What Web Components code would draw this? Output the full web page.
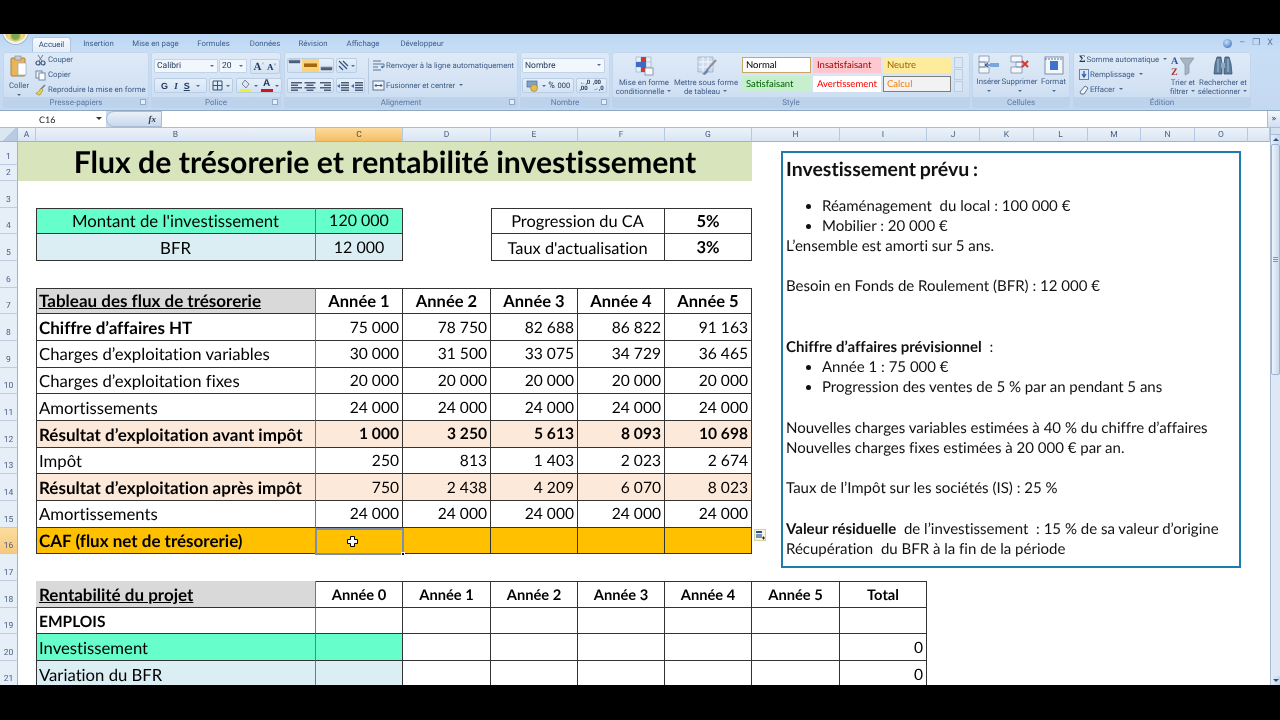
<!DOCTYPE html>
<html lang="fr">
<head>
<meta charset="utf-8">
<title>Flux de trésorerie</title>
<style>
  html, body { margin: 0; background: #000; }
  body { width: 1280px; height: 720px; overflow: hidden; font-family: "Lato", "Liberation Sans", sans-serif; }
</style>
</head>
<body>
<xl-app>
  <xl-ribbon></xl-ribbon>
  <xl-formula-bar cell="C16"></xl-formula-bar>
  <xl-sheet>
    <xl-textbox></xl-textbox>
  </xl-sheet>
</xl-app>

<script>
const UI_FONT = `"Roboto", "Liberation Sans", sans-serif`;
const SHEET_FONT = `"Lato", "Liberation Sans", sans-serif`;

class XlApp extends HTMLElement {
    constructor() {
        super();
        this.attachShadow({ mode: "open" });
        this.shadowRoot.innerHTML = `
            <style>
                :host { display: block; width: 1280px; height: 720px; padding: 34px 0 35px; box-sizing: border-box; background: #000; text-rendering: geometricPrecision; }
                .frame { display: flex; flex-direction: column; height: 651px; overflow: hidden; background: #fff; filter: blur(0.3px); }
            </style>
            <div class="frame"><slot></slot></div>
        `;
    }
}

// Groupe du ruban : contenu + libellé en bas
class XlGroup extends HTMLElement {
    constructor() {
        super();
        this.attachShadow({ mode: "open" });
    }
    connectedCallback() {
        const launcher = this.hasAttribute("launcher") ? `<span class="launch"></span>` : "";
        this.shadowRoot.innerHTML = `
            <style>
                :host { display: flex; flex-direction: column; flex: none; height: 56px; box-sizing: border-box; border-radius: 3px;
                        background: linear-gradient(#dfeaf7, #d3e2f4 60%, #c9dbf0); box-shadow: inset 0 0 0 1px #c2d6ec; }
                .body { height: 45px; display: flex; }
                .label { position: relative; height: 11px; text-align: center; font: 8px/11.5px ${UI_FONT}; color: #5a7ba3;
                         background: #bdd3ec; border-radius: 0 0 3px 3px; }
                .launch { position: absolute; right: 3px; top: 2px; width: 6px; height: 6px; border: 1px solid #8ea9c9; box-sizing: border-box; background: #e6eef8; }
            </style>
            <div class="body"><slot></slot></div>
            <div class="label">${this.getAttribute("label")}${launcher}</div>
        `;
        this.style.width = this.getAttribute("w") + "px";
        this.style.marginLeft = (this.getAttribute("gap") || 2) + "px";
    }
}

class XlRibbon extends HTMLElement {
    constructor() {
        super();
        this.attachShadow({ mode: "open" });
    }
    connectedCallback() {
        const tabs = [["Accueil", 39], ["Insertion", 55], ["Mise en page", 59], ["Formules", 57], ["Données", 46], ["Révision", 50], ["Affichage", 50], ["Développeur", 68]];
        this.shadowRoot.innerHTML = `
            <style>
                :host { display: block; height: 77px; flex: none; font-family: ${UI_FONT}; color: #3e5c86; font-size: 7.8px;
                        background: linear-gradient(#bcd7f3, #c8def5 25%, #c4d9f1); border-bottom: 1px solid #8fa8c4; box-sizing: border-box; position: relative; }
                .orb { position: absolute; left: 3px; top: -15px; width: 25px; height: 25px; border-radius: 50%; box-sizing: border-box; border: 2px solid #f0f3f6;
                       background: radial-gradient(circle at 50% 70%, #7ea64a 0 18%, #ecdc8a 34%, #dcc56a 55%, #b8aa7c 85%); box-shadow: 0 0 0 1px #a4b5c7; }
                .tabs { display: flex; height: 17px; padding-left: 32px; }
                .tab { flex: none; text-align: center; line-height: 19px; height: 17px; box-sizing: border-box; color: #3d5f8d; white-space: nowrap; }
                .tab.on { background: linear-gradient(#f6faff, #e2edf9); border: 1px solid #aec4de; border-bottom: 0; border-radius: 3px 3px 0 0; margin-top: 3px; height: 15px; line-height: 13px; color: #2e4a70; }
                .win { position: absolute; right: 7px; top: 3px; display: flex; align-items: center; gap: 7px; color: #5a7ba3; font-size: 9px; line-height: 12px; }
                .help { width: 9px; height: 9px; border-radius: 50%; background: radial-gradient(circle at 40% 35%, #c8e0fa, #2a63b5); margin-right: 0; }
                .groups { display: flex; padding-left: 1px; height: 56px; margin-top: 1px; }

                .mini { display: flex; align-items: center; gap: 2px; height: 15px; white-space: nowrap; color: #3e5c86; }
                .mini svg { flex: none; }
                .col { display: flex; flex-direction: column; }
                .big { display: flex; flex-direction: column; align-items: center; flex: none; text-align: center; line-height: 8.5px; white-space: nowrap; padding-top: 3px; }
                .big .txt { margin-top: 3px; }
                .arrow { display: inline-block; width: 0; height: 0; border: 2px solid transparent; border-top: 2.5px solid #4f6b90; border-bottom: 0; margin: 0 1px 1px 3px; vertical-align: middle; }

                .stack { display: flex; flex-direction: column; gap: 5px; padding: 7px 0 0 3px; }
                .row { display: flex; gap: 2px; height: 14px; }
                .box { display: flex; align-items: center; height: 14px; box-sizing: border-box; background: #f2f7fd; border: 1px solid #c0d3e9; padding: 0 2px; color: #223a5c; font-size: 8.5px; border-radius: 1px; }
                .box .arrow { margin-left: auto; }
                .tool { display: flex; align-items: center; justify-content: space-evenly; height: 15px; box-sizing: border-box; background: linear-gradient(#e6f0fb, #d3e2f4); border: 1px solid #b9cde4; border-radius: 2px; font-size: 9px; color: #223a5c; }

                .sep { width: 1px; margin: 6px 3px 3px; background: #b6cbe3; }
                .wrap { display: flex; flex-direction: column; padding-top: 6px; gap: 5px; }
                .wrap .mini { gap: 1px; color: #3e5c86; }

                .gallery { display: grid; grid-template-columns: 69px 68px 68px; grid-template-rows: 16px 16px; column-gap: 2px; row-gap: 3px; margin: 5px 0 0 3px; font: 9.5px/16px ${SHEET_FONT}; }
                .gallery span { padding: 1px 0 0 4px; box-sizing: border-box; }
                .g-normal { background: #fff; color: #000; box-shadow: inset 0 0 0 1px #caa760; }
                .g-bad { background: #ffc7ce; color: #9c0006; }
                .g-neutral { background: #ffeb9c; color: #9c6500; }
                .g-good { background: #c6efce; color: #006100; }
                .g-warn { background: #fff; color: #f00; }
                .g-calc { background: #f2f2f2; color: #fa7d00; box-shadow: inset 0 0 0 1px #7f7f7f; }
                .spin { width: 9px; margin: 5px 0 0 3px; display: flex; flex-direction: column; gap: 1px; }
                .spin i { display: block; height: 11px; background: #dbe7f5; border: 1px solid #b9cde4; box-sizing: border-box; }
            </style>
            <div class="orb"></div>
            <div class="tabs">
                ${tabs.map(([t, w], i) => `<div class="tab${i ? "" : " on"}" style="width:${w}px">${t}</div>`).join("")}
            </div>
            <div class="win"><span class="help"></span><span>–</span><span>&#10064;</span><span>X</span></div>
            <div class="groups">
                <xl-group label="Presse-papiers" w="146" launcher>
                    <div class="big" style="width:32px">
                        <svg width="18" height="22" viewBox="0 0 18 22"><rect x="1" y="3" width="14" height="18" rx="1" fill="#e8b55a" stroke="#a9823f"/><rect x="5" y="1" width="6" height="4" fill="#c9cdd3" stroke="#80848a" stroke-width=".6"/><path d="M8 8h8v12H8z" fill="#fff" stroke="#9aa7b6" stroke-width=".7"/></svg>
                        <span class="txt" style="margin-top:5px">Coller</span>
                        <span class="arrow" style="margin:3px 0 0"></span>
                    </div>
                    <div class="col">
                        <div class="mini"><svg width="11" height="12" viewBox="0 0 11 12"><path d="M3 1l4 6M8 1L4 7" stroke="#6f7d8d" fill="none"/><circle cx="3" cy="9" r="2" fill="none" stroke="#3b587c" stroke-width="1.2"/><circle cx="8" cy="9" r="2" fill="none" stroke="#3b587c" stroke-width="1.2"/></svg>Couper</div>
                        <div class="mini"><svg width="11" height="12" viewBox="0 0 11 12"><rect x="1" y="2" width="6" height="7" fill="#eef3f9" stroke="#6f87a5"/><rect x="4" y="4" width="6" height="7" fill="#fff" stroke="#6f87a5"/></svg>Copier</div>
                        <div class="mini"><svg width="11" height="12" viewBox="0 0 11 12"><path d="M10 1L6 5" stroke="#6f7d8d" stroke-width="1.6"/><path d="M6 4l2 2-3 5c-2 0-4-1-4-2 2 0 3-2 5-5z" fill="#e8d055" stroke="#8f7d2a" stroke-width=".6"/></svg>Reproduire la mise en forme</div>
                    </div>
                </xl-group>

                <xl-group label="Police" w="130" launcher>
                    <div class="stack">
                        <div class="row">
                            <div class="box" style="width:64px;font-family:${SHEET_FONT}">Calibri<span class="arrow"></span></div>
                            <div class="box" style="width:28px;margin-left:-1px;font-family:${SHEET_FONT}">20<span class="arrow"></span></div>
                            <div class="tool" style="width:30px;margin-left:1px;font:bold 11px 'Liberation Serif',serif;color:#1f3656"><span>A<sup style="font-size:5px;color:#c58a1e">˄</sup></span><span style="font-size:9px">A<sup style="font-size:5px;color:#3f6db0">˅</sup></span></div>
                        </div>
                        <div class="row">
                            <div class="tool" style="width:53px;font-family:'Liberation Sans',sans-serif">
                                <b>G</b><i style="font-family:'Liberation Serif',serif;font-weight:bold">I</i><b style="text-decoration:underline">S</b><span class="arrow" style="margin:0"></span>
                            </div>
                            <div class="tool" style="width:24px"><svg width="11" height="11" viewBox="0 0 11 11"><path d="M1 1h9v9H1zM5.500 1v9M1 5.500h9" fill="none" stroke="#33527a"/></svg><span class="arrow" style="margin:0"></span></div>
                            <div class="tool" style="width:46px;margin-left:1px">
                                <svg width="13" height="13" viewBox="0 0 13 13"><path d="M6 1l4 4-3 4-4-4z" fill="#dfe6ee" stroke="#5a6f88" stroke-width=".8"/><rect x="1" y="10" width="11" height="3" fill="#f2ee3a"/></svg><span class="arrow" style="margin:0"></span>
                                <span style="display:flex;flex-direction:column;align-items:center;font:bold 10px/10px 'Liberation Sans',sans-serif;color:#1f3656;border-bottom:3px solid #d7121c;width:12px;height:13px;box-sizing:border-box">A</span><span class="arrow" style="margin:0"></span>
                            </div>
                        </div>
                    </div>
                </xl-group>

                <xl-group label="Alignement" w="234" launcher gap="3">
                    <div class="stack" style="padding-left:3px;padding-top:6px;gap:5px">
                        <div class="row" style="height:15px">
                            <div class="tool" style="width:47px;justify-content:flex-start;overflow:hidden">
                                ${this.alignIcon(2)}<span style="background:#f9d27a;height:13px;display:flex;align-items:center;padding:0 1px;margin:0 1px">${this.alignIcon(6, "#a4660e")}</span>${this.alignIcon(10)}
                            </div>
                            <div class="tool" style="width:21px"><svg width="11" height="11" viewBox="0 0 11 11"><path d="M1 1l8 8M1 6l4 4M5 1l5 5" stroke="#33527a" fill="none" stroke-width="1.2"/></svg><span class="arrow" style="margin:0"></span></div>
                        </div>
                        <div class="row" style="height:15px">
                            <div class="tool" style="width:47px">${this.linesIcon("l")}${this.linesIcon("c")}${this.linesIcon("r")}</div>
                            <div class="tool" style="width:29px">${this.linesIcon("i")}${this.linesIcon("o")}</div>
                        </div>
                    </div>
                    <div class="sep"></div>
                    <div class="wrap">
                        <div class="mini"><svg width="13" height="13" viewBox="0 0 13 13"><path d="M1 2h8M1 5h11v3H9M1 8h5M1 11h8" stroke="#5d7593" fill="none"/><path d="M9 8l2-1.500v3z" fill="#3f6db0"/></svg>Renvoyer à la ligne automatiquement</div>
                        <div class="mini"><svg width="13" height="13" viewBox="0 0 13 13"><rect x="1" y="2" width="11" height="9" fill="#f1f5fa" stroke="#5d7593"/><path d="M3 6.500h7M3 6.500l1.500-1.500M3 6.500l1.500 1.500M10 6.500L8.500 5M10 6.500L8.500 8" stroke="#2f5fa3" fill="none"/></svg>Fusionner et centrer<span class="arrow"></span></div>
                    </div>
                </xl-group>

                <xl-group label="Nombre" w="90" launcher>
                    <div class="stack" style="padding:6px 0 0 2px;gap:5px">
                        <div class="box" style="width:83px;height:15px;font-family:${SHEET_FONT}">Nombre<span class="arrow"></span></div>
                        <div class="row" style="height:15px">
                            <div class="tool" style="width:52px"><svg width="13" height="12" viewBox="0 0 13 12"><rect x="1" y="1" width="10" height="6" fill="#7fa3c9" stroke="#4b6b91" stroke-width=".7"/><circle cx="8" cy="8" r="3.500" fill="#e4bd4f" stroke="#9b7b24" stroke-width=".6"/></svg><span class="arrow" style="margin:0"></span><span>%</span><span style="font-size:7.500px">000</span></div>
                            <div class="tool" style="width:31px;font-size:6px;line-height:6px;font-weight:bold"><span>←,0<br>,00</span><span>,00<br>→,0</span></div>
                        </div>
                    </div>
                </xl-group>

                <xl-group label="Style" w="358">
                    <div class="big" style="width:58px;margin-left:3px">
                        <svg width="21" height="21" viewBox="0 0 21 21"><path d="M2 2h15v15H2z" fill="#e9eff7" stroke="#9cb1cb" stroke-width=".7"/><path d="M2 7h15M2 12h15M7 2v15M12 2v15" stroke="#9cb1cb" stroke-width=".6"/><rect x="7" y="2" width="5" height="5" fill="#d7342a"/><rect x="2" y="7" width="10" height="5" fill="#3d6bc4"/><rect x="7" y="12" width="5" height="5" fill="#d7342a"/><rect x="11" y="13" width="8" height="7" fill="#f5f7fa" stroke="#667a94" stroke-width=".7"/></svg>
                        <span class="txt">Mise en forme<br>conditionnelle<span class="arrow"></span></span>
                    </div>
                    <div class="big" style="width:66px">
                        <svg width="21" height="21" viewBox="0 0 21 21"><path d="M2 2h15v15H2z" fill="#cfdcef" stroke="#8ea6c6" stroke-width=".7"/><path d="M2 7h15M2 12h15M7 2v15M12 2v15" stroke="#fff" stroke-width=".8"/><path d="M20 5L11 15" stroke="#8b9098" stroke-width="2"/><path d="M11 14l2 2-4 4-3-1c2-1 3-3 5-5z" fill="#6e87a8"/></svg>
                        <span class="txt">Mettre sous forme<br>de tableau<span class="arrow"></span></span>
                    </div>
                    <div class="gallery">
                        <span class="g-normal">Normal</span><span class="g-bad">Insatisfaisant</span><span class="g-neutral">Neutre</span>
                        <span class="g-good">Satisfaisant</span><span class="g-warn">Avertissement</span><span class="g-calc">Calcul</span>
                    </div>
                    <div class="spin"><i></i><i></i><i></i></div>
                </xl-group>

                <xl-group label="Cellules" w="98">
                    <div class="big" style="width:27px;margin-left:3px">
                        <svg width="22" height="20" viewBox="0 0 22 20"><path d="M1 1h10v6H1zM1 7h6v5H1zM1 12h10v6H1z" fill="#f3f6fa" stroke="#7b90a9" stroke-width=".8"/><rect x="12" y="8" width="9" height="4" fill="#7aa6de"/><path d="M12 10H7m0 0l3-2m-3 2l3 2" stroke="#27508f" fill="none"/></svg>
                        <span class="txt">Insérer</span><span class="arrow" style="margin:3px 0 0"></span>
                    </div>
                    <div class="big" style="width:35px">
                        <svg width="22" height="20" viewBox="0 0 22 20"><path d="M2 1h11v6H2zM7 7h6v5H7zM2 12h11v6H2z" fill="#f3f6fa" stroke="#7b90a9" stroke-width=".8"/><path d="M13 6l6 6m0-6l-6 6" stroke="#d8382d" stroke-width="2"/></svg>
                        <span class="txt">Supprimer</span><span class="arrow" style="margin:3px 0 0"></span>
                    </div>
                    <div class="big" style="width:33px">
                        <svg width="22" height="20" viewBox="0 0 22 20"><rect x="2" y="2" width="18" height="17" fill="#f3f6fa" stroke="#7b90a9"/><path d="M2 4h18" stroke="#5d7593" stroke-dasharray="2 1"/><rect x="7" y="6" width="8" height="9" fill="#3f73c9"/></svg>
                        <span class="txt">Format</span><span class="arrow" style="margin:3px 0 0"></span>
                    </div>
                </xl-group>

                <xl-group label="Édition" w="178" gap="3">
                    <div class="col" style="width:92px;padding-left:6px;box-sizing:border-box">
                        <div class="mini" style="height:15px;gap:1px"><span style="font:bold 10px 'Liberation Serif',serif;color:#1f3656;width:10px">Σ</span>Somme automatique<span class="arrow"></span></div>
                        <div class="mini" style="height:15px;gap:1px"><svg width="10" height="11" viewBox="0 0 10 11"><rect x=".5" y=".5" width="9" height="10" fill="#dce8f6" stroke="#5f86b7"/><path d="M5 2v5M3 5l2 3 2-3" stroke="#2a5fb0" fill="none" stroke-width="1.300"/></svg>Remplissage<span class="arrow"></span></div>
                        <div class="mini" style="height:15px;gap:1px"><svg width="10" height="11" viewBox="0 0 10 11"><path d="M1 8l5-6 3 2-4 6H2z" fill="#f4f5f7" stroke="#5d6f88"/></svg>Effacer<span class="arrow"></span></div>
                    </div>
                    <div class="big" style="width:36px">
                        <svg width="24" height="24" viewBox="0 0 24 24" style="margin-bottom:-3px"><text x="0" y="9" font-size="10" font-weight="bold" font-family="Liberation Serif" fill="#2a55a0">A</text><text x="0" y="20" font-size="10" font-weight="bold" font-family="Liberation Serif" fill="#a5322a">Z</text><path d="M9 3h14l-5 7v8l-4 2V10z" fill="#a7b4c4" stroke="#7b8897" stroke-width=".6"/></svg>
                        <span class="txt">Trier et<br>filtrer<span class="arrow"></span></span>
                    </div>
                    <div class="big" style="width:44px">
                        <svg width="22" height="21" viewBox="0 0 22 21"><path d="M3 9l2-7h4l1 7v10H2zM19 9l-2-7h-4l-1 7v10h8z" fill="#5f7f9f" stroke="#2f4760" stroke-width=".7"/><rect x="9" y="8" width="4" height="5" fill="#8da8c3"/><path d="M6 4v13M16 4v13" stroke="#a9c3da"/></svg>
                        <span class="txt">Rechercher et<br>sélectionner<span class="arrow"></span></span>
                    </div>
                </xl-group>
            </div>
        `;
    }

    alignIcon(y, color = "#4d5f78") {
        return `<svg width="15" height="13" viewBox="0 0 15 13"><rect x="1" y="${y - 2}" width="13" height="4" fill="${color}" rx=".5"/><rect x="1" y="${y - 2}" width="13" height="1" fill="#fff" opacity=".3"/></svg>`;
    }

    linesIcon(kind) {
        const w = { l: [11, 7, 11, 7], c: [11, 7, 11, 7], r: [11, 7, 11, 7], i: [8, 8, 8, 8], o: [8, 8, 8, 8] }[kind];
        const x = (len) => (kind === "r" ? 12 - len : kind === "c" ? (12 - len) / 2 : kind === "i" || kind === "o" ? 4 : 1);
        const lines = w.map((len, n) => `<rect x="${x(len)}" y="${2 + n * 2.500}" width="${len}" height="1.500" fill="#4d5f78"/>`).join("");
        return `<svg width="13" height="12" viewBox="0 0 13 12">${lines}${kind === "i" || kind === "o" ? `<path d="M0 6l3-2v4z" fill="#3f6db0"/>` : ""}</svg>`;
    }
}

class XlFormulaBar extends HTMLElement {
    constructor() {
        super();
        this.attachShadow({ mode: "open" });
    }
    connectedCallback() {
        this.shadowRoot.innerHTML = `
            <style>
                :host { display: flex; flex: none; height: 17px; box-sizing: border-box; background: #c5d8ee; border-bottom: 1px solid #a7bdd8; font-family: ${SHEET_FONT}; }
                .name { width: 106px; flex: none; background: #fff; display: flex; align-items: center; padding-left: 39px; box-sizing: border-box; font-size: 9px; color: #222; position: relative; }
                .name::after { content: ""; position: absolute; right: 4px; top: 6px; border: 3px solid transparent; border-top: 3px solid #333; border-bottom: 0; }
                .pill { width: 56px; flex: none; display: flex; align-items: center; justify-content: flex-end; padding-right: 5px; box-sizing: border-box; border-radius: 8px 0 0 8px; background: linear-gradient(#e9f0f9, #c9d9ec); border: 1px solid #a9bdd6; font: italic bold 9px "Liberation Serif", serif; color: #334; }
                .input { flex: 1; background: #fff; }
                .more { width: 12px; flex: none; background: linear-gradient(#f1f6fc, #cfdeef); border-left: 1px solid #a7bdd8; font: 8px/15px "DejaVu Sans", sans-serif; text-align: center; color: #223; }
            </style>
            <div class="name">${this.getAttribute("cell")}</div>
            <div class="pill">fx</div>
            <div class="input"></div>
            <div class="more">»</div>
        `;
    }
}

class XlSheet extends HTMLElement {
    constructor() {
        super();
        this.attachShadow({ mode: "open" });
    }
    connectedCallback() {
        const cols = ["A", "B", "C", "D", "E", "F", "G", "H", "I", "J", "K", "L", "M", "N", "O"];
        const widths = [18, 280, 87, 88, 87, 87, 87, 88, 87, 53, 54, 54, 53, 54, 53, 22];
        const cells = [];
        const put = (row, col, text, cls = "", span = 1, rowSpan = 1) =>
            cells.push(`<div class="c ${cls}" style="grid-row:${row + 1}/span ${rowSpan};grid-column:${col}/span ${span}">${text}</div>`);

        const head = cols.map((c, i) => `<div class="ch${c === "C" ? " sel" : ""}" style="grid-row:1;grid-column:${i + 2}">${c}</div>`).join("")
            + `<div class="ch" style="grid-row:1;grid-column:17"></div>`;
        const rowsHead = Array.from({ length: 21 }, (_, i) => `<div class="rh${i === 15 ? " sel" : ""}" style="grid-row:${i + 2};grid-column:1">${i + 1}</div>`).join("");

        // Titre
        put(1, 2, "Flux de trésorerie et rentabilité investissement", "title", 7, 2);

        // Paramètres
        put(4, 3, "Montant de l'investissement", "mid top left b green");
        put(4, 4, "120 000", "mid top green");
        put(5, 3, "BFR", "mid left b blue");
        put(5, 4, "12 000", "mid blue");
        put(4, 6, "Progression du CA", "mid top left lift", 2);
        put(4, 8, "5%", "mid top bold");
        put(5, 6, "Taux d'actualisation", "mid left lift", 2);
        put(5, 8, "3%", "mid bold");

        // Tableau des flux
        put(7, 3, "Tableau des flux de trésorerie", "top left b grey bold ul");
        for (let i = 1; i <= 5; i++) put(7, 3 + i, "Année " + i, "top mid bold");
        const flux = [
            [8, "Chiffre d’affaires HT", ["75 000", "78 750", "82 688", "86 822", "91 163"], "labelbold"],
            [9, "Charges d’exploitation variables", ["30 000", "31 500", "33 075", "34 729", "36 465"], ""],
            [10, "Charges d’exploitation fixes", ["20 000", "20 000", "20 000", "20 000", "20 000"], ""],
            [11, "Amortissements", ["24 000", "24 000", "24 000", "24 000", "24 000"], ""],
            [12, "Résultat d’exploitation avant impôt", ["1 000", "3 250", "5 613", "8 093", "10 698"], "peach allbold"],
            [13, "Impôt", ["250", "813", "1 403", "2 023", "2 674"], ""],
            [14, "Résultat d’exploitation après impôt", ["750", "2 438", "4 209", "6 070", "8 023"], "peach labelbold"],
            [15, "Amortissements", ["24 000", "24 000", "24 000", "24 000", "24 000"], ""],
            [16, "CAF (flux net de trésorerie)", ["", "", "", "", ""], "orange labelbold"],
        ];
        for (const [r, label, vals, kind] of flux) {
            const fill = kind.includes("peach") ? "peach" : kind.includes("orange") ? "orange" : "";
            const labelBold = kind.includes("bold") ? "bold" : "";
            put(r, 3, label, `left b ${fill} ${labelBold}`);
            vals.forEach((v, i) => put(r, 4 + i, v, `num ${fill} ${kind.includes("allbold") ? "bold" : ""}`));
        }

        // Rentabilité
        put(18, 3, "Rentabilité du projet", "grey bold ul noborder b");
        for (let i = 0; i <= 5; i++) put(18, 4 + i, "Année " + i, "top mid bold small lift");
        put(18, 10, "Total", "top mid bold small lift");
        put(19, 3, "EMPLOIS", "left b bold caps low");
        put(20, 3, "Investissement", "left b green low");
        put(21, 3, "Variation du BFR", "left b blue low");
        for (let r = 19; r <= 21; r++) {
            for (let c = 4; c <= 10; c++) {
                const fill = c === 4 ? (r === 20 ? "green" : r === 21 ? "blue" : "") : "";
                put(r, c, c === 10 && r > 19 ? "0" : "", `num low ${fill}`);
            }
        }

        this.shadowRoot.innerHTML = `
            <style>
                :host { display: flex; flex: 1; min-height: 0; position: relative; background: #fff; overflow: hidden; font-family: ${SHEET_FONT}; color: #000; font-variant-ligatures: none; }
                .grid { flex: none; width: 1270px; display: grid; grid-template-columns: 18px ${widths.map((w) => w + "px").join(" ")};
                        grid-template-rows: 14px 23px 16px repeat(19, 26.67px); background: #fff; }
                .corner { grid-row: 1; grid-column: 1; background: linear-gradient(135deg, #dbe6f3 50%, #b8cbe2 50%); border-right: 1px solid #a9bdd6; border-bottom: 1px solid #9db3cf; box-sizing: border-box; }
                .ch { background: linear-gradient(#edf2f9, #d9e5f3); border-right: 1px solid #b6c9e0; border-bottom: 1px solid #9db3cf; box-sizing: border-box; font: 8.5px/14px ${UI_FONT}; text-align: center; color: #4a6183; }
                .ch.sel { background: linear-gradient(#fbdc9d, #f6bd63); color: #5a4a2a; }
                .rh { background: #e6eef8; border-right: 1px solid #9db3cf; border-bottom: 1px solid #bccde1; box-sizing: border-box; font: 8.5px/10px ${UI_FONT}; text-align: center; color: #4a6183; display: flex; align-items: flex-end; justify-content: center; padding-bottom: 2px; }
                .rh.sel { background: linear-gradient(#fbdc9d, #f6c97e); }

                .c { box-sizing: border-box; display: flex; align-items: center; font-size: 16.7px; padding: 0 3px; white-space: nowrap; border-right: 1px solid #333; border-bottom: 1px solid #333; min-width: 0; }
                .title { font-size: 30.2px; font-weight: 700; justify-content: center; background: #d8e4bc; border: 0; padding-top: 1px; }
                .left { border-left: 1px solid #333; padding-left: 2px; padding-top: 1px; }
                .num { padding-top: 1px; }
                .top { border-top: 1px solid #333; padding-top: 0; }
                .b { border-right-color: #777; }
                .mid { justify-content: center; font-size: 16px; padding-top: 0; }
                .mid.left { font-size: 16.4px; }
                .mid.left.b { font-size: 16.8px; }
                .mid.bold { font-size: 16.5px; }
                .num { justify-content: flex-end; font-size: 15.6px; }
                .bold { font-weight: 700; }
                .left.bold { font-size: 17px; }
                .ul { text-decoration: underline; }
                .mid.small { font-size: 14.7px; }
                .caps.caps { font-size: 15.500px; }
                .c.lift { padding-top: 2px; }
                .c.low { padding-top: 3px; }
                .green { background: #66ffcc; }
                .blue { background: #daeef3; }
                .grey { background: #d9d9d9; }
                .peach { background: #fde9d9; }
                .orange { background: #ffc000; }
                .noborder { font-size: 17px; border-bottom: 1px solid #333; padding-left: 3px; padding-top: 1px; }

                .selection { position: absolute; left: 315px; top: 399.500px; width: 89px; height: 27.500px; box-sizing: border-box; border: 2px solid #7f8fa9; }
                .selection::after { content: ""; position: absolute; right: -3px; bottom: -3px; width: 4px; height: 4px; background: #000; border: 1px solid #fff; box-sizing: border-box; }
                .cursor { position: absolute; left: 347px; top: 408px; }
                .autofill { position: absolute; left: 754px; top: 401px; width: 12px; height: 12px; }
                .scroll { flex: none; width: 10px; background: #dfe9f5; border-left: 1px solid #a9bdd6; box-sizing: border-box; display: flex; flex-direction: column; }
                .scroll .split { height: 6px; background: #d3e1f1; border-bottom: 1px solid #a9bdd6; }
                .scroll .up, .scroll .down { height: 9px; background: linear-gradient(90deg, #e6eef8, #c6d7ea); position: relative; }
                .scroll .up::after, .scroll .down::after { content: ""; position: absolute; left: 2px; top: 3px; border: 3px solid transparent; }
                .scroll .up::after { border-bottom: 3px solid #33527a; border-top: 0; }
                .scroll .down::after { border-top: 3px solid #33527a; border-bottom: 0; }
                .scroll .thumb { height: 231px; background: linear-gradient(90deg, #eff4fb, #c9d9ed); border: 1px solid #9db3cf; box-sizing: border-box; border-radius: 2px; position: relative; }
                .scroll .thumb::after { content: ""; position: absolute; left: 1px; right: 1px; top: 112px; height: 6px; background: repeating-linear-gradient(#7f97b5 0 1px, transparent 1px 2px); }
                .scroll .fill { flex: 1; }
            </style>
            <div class="grid">
                <div class="corner"></div>
                ${head}${rowsHead}${cells.join("")}
            </div>
            <div class="scroll"><div class="split"></div><div class="up"></div><div class="thumb"></div><div class="fill"></div><div class="down"></div></div>
            <div class="selection"></div>
            <svg class="cursor" width="11" height="11" viewBox="0 0 11 11"><path d="M3.500 .5h4v3h3v4h-3v3h-4v-3h-3v-4h3z" fill="#fff" stroke="#000"/></svg>
            <svg class="autofill" viewBox="0 0 12 12"><rect x=".5" y=".5" width="11" height="11" fill="#f7f3dd" stroke="#d8d2a8"/><rect x="2" y="2" width="6" height="2" fill="#27508f"/><rect x="2" y="5" width="6" height="4" fill="#7a93b8"/><path d="M8 9h3M9.500 7.500v3" stroke="#222"/></svg>
            <slot></slot>
        `;
    }
}

class XlTextbox extends HTMLElement {
    constructor() {
        super();
        this.attachShadow({ mode: "open" });
        this.shadowRoot.innerHTML = `
            <style>
                :host { display: block; position: absolute; left: 781px; top: 23px; width: 460px; height: 417px; box-sizing: border-box; border: 2px solid #1f7ab0; background: #fff; padding: 6px 3px; font: 15px/20.2px ${SHEET_FONT}; color: #111; white-space: nowrap; font-variant-ligatures: none; }
                h2 { font-size: 19.5px; line-height: 22px; margin: 0 0 14.5px; font-weight: 700; word-spacing: -1px; }
                ul { margin: 0; padding: 0 0 0 36px; }
                p { margin: 0; min-height: 20.2px; }
                b { font-weight: 700; }
            </style>
            <h2>Investissement prévu :</h2>
            <ul>
                <li>Réaménagement&nbsp; du local : 100 000 €</li>
                <li>Mobilier : 20 000 €</li>
            </ul>
            <p>L’ensemble est amorti sur 5 ans.</p>
            <p></p>
            <p>Besoin en Fonds de Roulement (BFR) : 12 000 €</p>
            <p></p>
            <p></p>
            <p><b>Chiffre d’affaires prévisionnel</b>&nbsp; :</p>
            <ul>
                <li>Année 1 : 75 000 €</li>
                <li>Progression des ventes de 5 % par an pendant 5 ans</li>
            </ul>
            <p></p>
            <p>Nouvelles charges variables estimées à 40 % du chiffre d’affaires</p>
            <p>Nouvelles charges fixes estimées à 20 000 € par an.</p>
            <p></p>
            <p>Taux de l’Impôt sur les sociétés (IS) : 25 %</p>
            <p></p>
            <p><b>Valeur résiduelle</b>&nbsp; de l’investissement&nbsp; : 15 % de sa valeur d’origine</p>
            <p>Récupération&nbsp; du BFR à la fin de la période</p>
        `;
    }
}

customElements.define("xl-app", XlApp);
customElements.define("xl-group", XlGroup);
customElements.define("xl-ribbon", XlRibbon);
customElements.define("xl-formula-bar", XlFormulaBar);
customElements.define("xl-sheet", XlSheet);
customElements.define("xl-textbox", XlTextbox);
</script>
</body>
</html>
